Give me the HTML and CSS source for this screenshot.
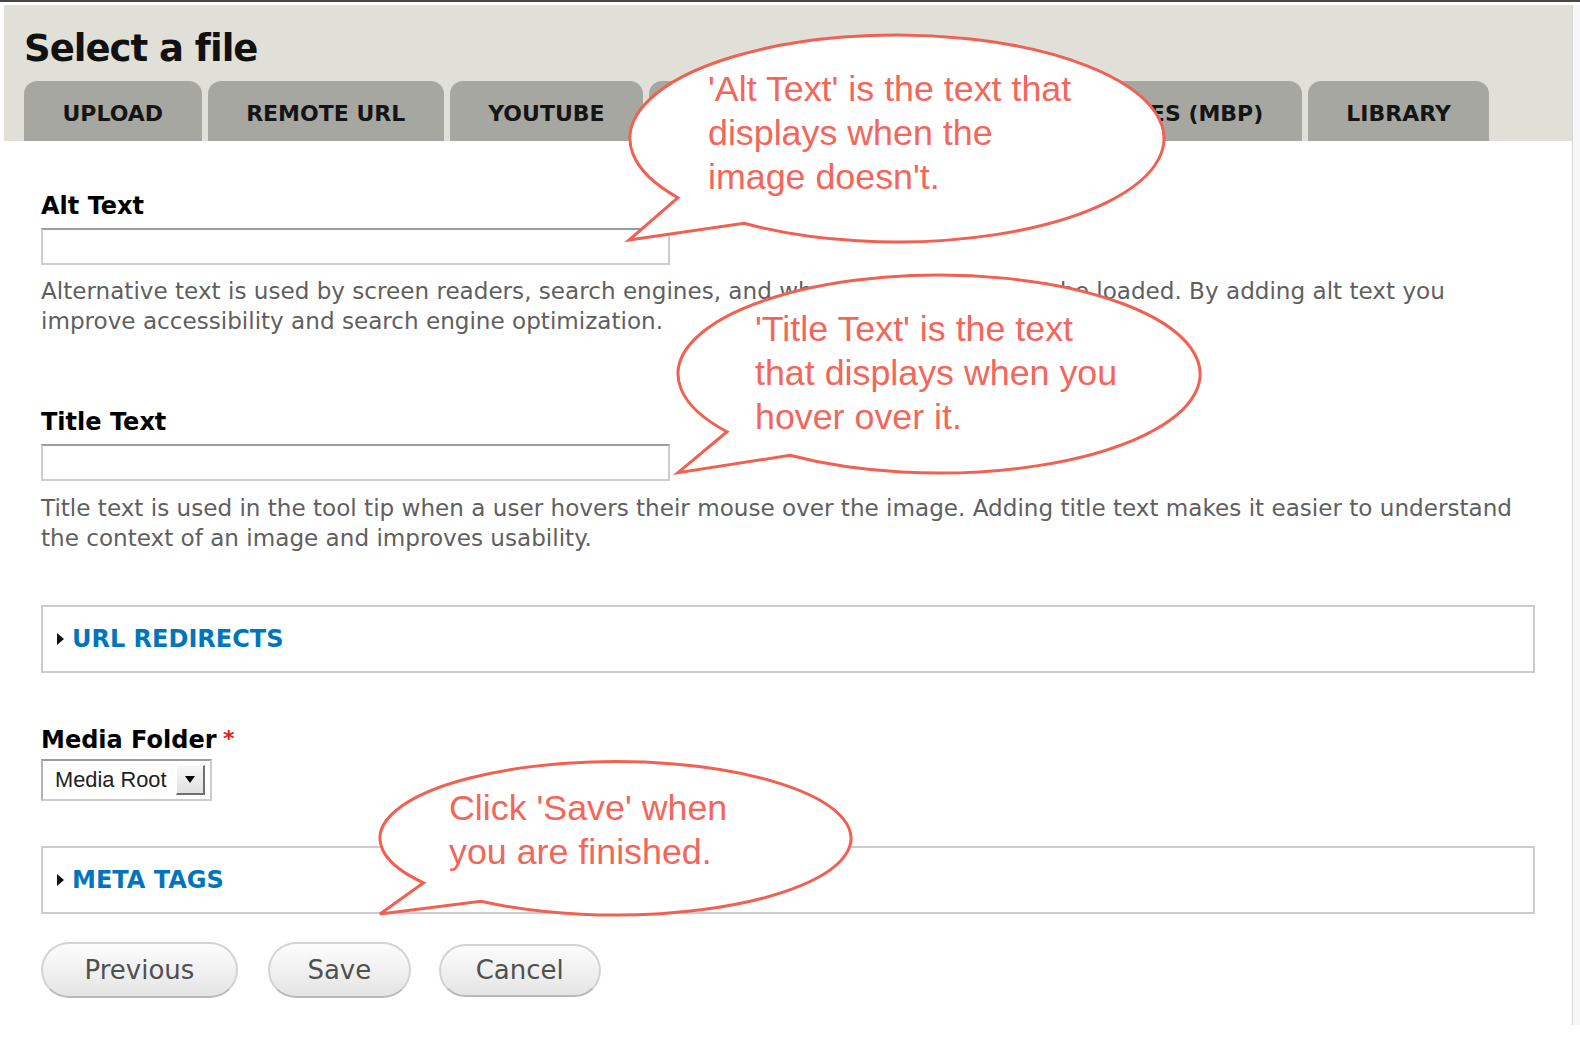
FILE: index.html
```html
<!DOCTYPE html>
<html lang="en">
<head>
<meta charset="utf-8">
<title>Select a file</title>
<link rel="stylesheet" href="styles.css">
</head>
<body>
<div class="topline"></div>
<div class="frame">
  <div class="page">
    <header class="header">
      <h1 class="title">Select a file</h1>
      <ul class="tabs">
        <li class="tab">UPLOAD</li>
        <li class="tab">REMOTE URL</li>
        <li class="tab">YOUTUBE</li>
        <li class="tab">WEB</li>
        <li class="tab tab-wide">MY FILES</li>
        <li class="tab">IMAGES (MBP)</li>
        <li class="tab">LIBRARY</li>
      </ul>
    </header>
    <form class="content">
      <div class="field">
        <label class="label">Alt Text</label>
        <input class="text-input" type="text">
        <p class="desc">Alternative text is used by screen readers, search engines, and when the image cannot be loaded. By adding alt text you improve accessibility and search engine optimization.</p>
      </div>
      <div class="field field-title">
        <label class="label">Title Text</label>
        <input class="text-input" type="text">
        <p class="desc">Title text is used in the tool tip when a user hovers their mouse over the image. Adding title text makes it easier to understand the context of an image and improves usability.</p>
      </div>
      <div class="collapsible collapsible-url">
        <span class="caret"></span>
        <span class="collapsible-title">URL REDIRECTS</span>
      </div>
      <div class="field field-media">
        <label class="label">Media Folder <span class="req">*</span></label>
        <div class="select">
          <span class="select-value">Media Root</span>
          <span class="select-arrow"><span class="arrow-glyph"></span></span>
        </div>
      </div>
      <div class="collapsible collapsible-meta">
        <span class="caret"></span>
        <span class="collapsible-title">META TAGS</span>
      </div>
      <div class="actions">
        <button class="btn btn-prev" type="button">Previous</button>
        <button class="btn btn-save" type="button">Save</button>
        <button class="btn btn-cancel" type="button">Cancel</button>
      </div>
    </form>
  </div>
  <div class="gutter"></div>
</div>

<div class="annotations">
  <svg class="bubbles" width="1580" height="1042" viewBox="0 0 1580 1042" xmlns="http://www.w3.org/2000/svg">
    <path class="bubble" d="M 678 197.7 L 629 240 L 744 223.3 A 267 103.5 0 1 0 678 197.7 Z"/>
    <path class="bubble" d="M 727 431.75 L 678 472.7 L 790 455.3 A 261 99 0 1 0 727 431.75 Z"/>
    <path class="bubble" d="M 423.6 882.8 L 380 914 L 481 901.3 A 235.5 76.7 0 1 0 423.6 882.8 Z"/>
  </svg>
  <div class="note note-alt">'Alt Text' is the text that<br>displays when the<br>image doesn't.</div>
  <div class="note note-title">'Title Text' is the text<br>that displays when you<br>hover over it.</div>
  <div class="note note-save">Click 'Save' when<br>you are finished.</div>
</div>
</body>
</html>
```

FILE: styles.css
```css
* {
  box-sizing: border-box;
}

html,
body {
  margin: 0;
  padding: 0;
}

body {
  position: relative;
  width: 1580px;
  height: 1042px;
  overflow: hidden;
  background: #ffffff;
  font-family: "DejaVu Sans", "Liberation Sans", sans-serif;
}

.topline {
  height: 2px;
  background: #474747;
  margin-bottom: 3px;
}

.frame {
  display: flex;
  height: 1020px;
}

.page {
  width: 1569px;
  margin-left: 4px;
  border-right: 1px solid #d6d6d6;
  background: #ffffff;
}

.gutter {
  flex: 1;
  background: #f7f7f7;
}

/* Header */
.header {
  background: #e0dfd8;
  padding: 22px 0 0 20px;
}

.title {
  margin: 0;
  font-family: "DejaVu Sans", sans-serif;
  font-weight: bold;
  font-size: 37px;
  line-height: 44px;
  letter-spacing: -1px;
  color: #111111;
}

.tabs {
  list-style: none;
  margin: 10px 0 0;
  padding: 0;
  display: flex;
  gap: 6px;
}

.tab {
  height: 60px;
  padding: 5px 38.5px 0;
  line-height: 55px;
  background: #a7a7a2;
  border-radius: 13px 13px 0 0;
  font-weight: bold;
  font-size: 22px;
  color: #151515;
  white-space: nowrap;
}

.tab-wide {
  min-width: 252px;
  text-align: center;
}

/* Form */
.content {
  padding: 50px 37px 0;
}

.field {
  display: block;
}

.label {
  display: block;
  font-weight: bold;
  font-size: 24px;
  line-height: 30px;
  color: #000000;
}

.req {
  color: #e3211b;
  font-size: 22px;
  position: relative;
  top: -2px;
  margin-left: -2px;
}

.text-input {
  display: block;
  width: 629px;
  height: 37px;
  margin: 7px 0 0;
  padding: 0;
  border: 2px solid #cdcdcd;
  border-top-color: #9b9b9b;
  background: #ffffff;
  outline: none;
}

.desc {
  margin: 11px 0 0;
  font-size: 23.1px;
  line-height: 30px;
  color: #5f5f5f;
}

.field-title {
  margin-top: 71px;
}

.field-title .desc {
  margin-top: 12px;
}

.collapsible {
  height: 67.5px;
  border: 2px solid #cccccc;
  display: flex;
  align-items: center;
  padding-left: 14px;
  gap: 8px;
}

.collapsible-url {
  margin-top: 52px;
}

.collapsible-meta {
  margin-top: 45px;
}

.caret {
  width: 0;
  height: 0;
  border-left: 7px solid #111111;
  border-top: 6px solid transparent;
  border-bottom: 6px solid transparent;
}

.collapsible-title {
  font-weight: bold;
  font-size: 24px;
  color: #0074bd;
}

.field-media {
  margin-top: 52.6px;
}

.select {
  width: 171px;
  height: 42px;
  margin-top: 3px;
  border: 2px solid #cbcbcb;
  border-top-color: #9c9c9c;
  border-left-color: #b4b4b4;
  display: flex;
  align-items: center;
  padding: 0 5px 0 12px;
  background: #ffffff;
}

.select-value {
  font-family: "Liberation Sans", Arial, sans-serif;
  font-size: 21.8px;
  color: #222222;
}

.select-arrow {
  margin-left: auto;
  width: 29px;
  height: 30px;
  background: linear-gradient(#f7f7f7, #e1e1e1);
  border-top: 1px solid #ffffff;
  border-left: 1px solid #ffffff;
  border-right: 2px solid #707070;
  border-bottom: 2px solid #707070;
  display: flex;
  align-items: center;
  justify-content: center;
}

.arrow-glyph {
  width: 0;
  height: 0;
  border-top: 7px solid #000000;
  border-left: 5px solid transparent;
  border-right: 5px solid transparent;
}

.actions {
  display: flex;
  align-items: flex-start;
  gap: 30px;
  margin-top: 28.5px;
}

.btn {
  height: 56px;
  padding: 0 40px;
  border: 2px solid #d3d3d3;
  border-bottom-color: #b9b9b9;
  border-radius: 28px;
  background: linear-gradient(#fdfdfd, #e4e4e4);
  font-family: "DejaVu Sans", sans-serif;
  font-size: 26px;
  color: #505050;
}

.btn-prev {
  padding: 0 41.5px;
}

.btn-save {
  padding: 0 37.5px;
}

.btn-cancel {
  padding: 0 35px;
  height: 53px;
  margin-top: 1.5px;
  margin-left: -2px;
}

/* Annotation overlay */
.annotations {
  position: absolute;
  left: 0;
  top: 0;
  width: 1580px;
  height: 1042px;
  pointer-events: none;
}

.bubbles {
  position: absolute;
  left: 0;
  top: 0;
}

.bubble {
  fill: #ffffff;
  stroke: #f26052;
  stroke-width: 3;
  stroke-linejoin: miter;
}

.note {
  position: absolute;
  font-family: "Liberation Sans", Arial, sans-serif;
  font-size: 35.8px;
  line-height: 44px;
  color: #f3665a;
  white-space: nowrap;
}

.note-alt {
  left: 708px;
  top: 67px;
}

.note-title {
  left: 755px;
  top: 307px;
}

.note-save {
  left: 449px;
  top: 786px;
}
```
